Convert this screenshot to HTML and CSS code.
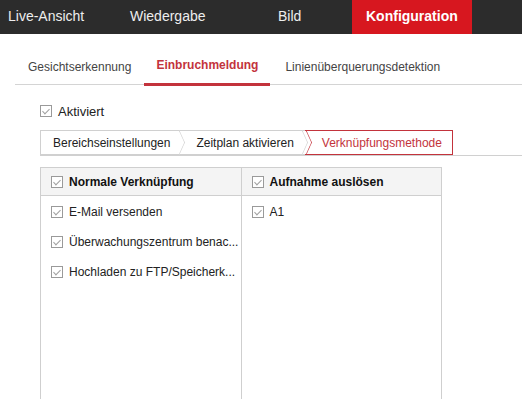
FILE: index.html
```html
<!DOCTYPE html>
<html>
<head>
    <meta charset="UTF-8">
    <title>Konfiguration</title>
    <link rel="stylesheet" href="styles.css">
</head>
<body>
    <div class="topbar">
        <a class="nav nav-live">Live-Ansicht</a>
        <a class="nav nav-play">Wiedergabe</a>
        <a class="nav nav-image">Bild</a>
        <a class="nav nav-config active">Konfiguration</a>
    </div>

    <div class="subtabs">
        <span class="subtab">Gesichtserkennung</span>
        <span class="subtab active">Einbruchmeldung</span>
        <span class="subtab">Linienüberquerungsdetektion</span>
    </div>

    <div class="content">
        <label class="check-row enable">
            <span class="box"></span>Aktiviert
        </label>

        <div class="steps">
            <span class="step">Bereichseinstellungen</span>
            <span class="step">Zeitplan aktivieren</span>
            <span class="step current">Verknüpfungsmethode</span>
        </div>

        <div class="link-table">
            <div class="col">
                <div class="col-head"><span class="box"></span>Normale Verknüpfung</div>
                <div class="col-body">
                    <div class="check-row"><span class="box"></span>E-Mail versenden</div>
                    <div class="check-row"><span class="box"></span>Überwachungszentrum benac...</div>
                    <div class="check-row"><span class="box"></span>Hochladen zu FTP/Speicherk...</div>
                </div>
            </div>
            <div class="col">
                <div class="col-head"><span class="box"></span>Aufnahme auslösen</div>
                <div class="col-body">
                    <div class="check-row"><span class="box"></span>A1</div>
                </div>
            </div>
        </div>
    </div>
</body>
</html>
```

FILE: styles.css
```css
html {
    font-family: "Liberation Sans", Arial, sans-serif;
    box-sizing: border-box;
}

*,
*:before,
*:after {
    box-sizing: inherit;
}

body {
    margin: 0;
    width: 522px;
    height: 399px;
    overflow: hidden;
    background: white;
    color: #222;
    font-size: 12px;
}

.topbar {
    display: flex;
    height: 34px;
    background: #2c2c2c;
}

.nav {
    color: #eee;
    font-size: 14px;
    line-height: 32px;
}

.nav-live { padding-left: 8px; width: 130px; }
.nav-play { width: 148px; }
.nav-image { width: 74px; }

.nav-config {
    width: 120px;
    padding-left: 14px;
    font-weight: bold;
    color: white;
    background: #d7171f;
}

.subtabs {
    display: flex;
    margin: 20px 0 0 15px;
    border-bottom: 1px solid #d4d4d4;
    height: 31px;
}

.subtab {
    padding: 6px 13px 0;
    color: #444;
    white-space: nowrap;
}

.subtab.active {
    color: #c3333c;
    font-weight: bold;
    padding: 4px 12px 0;
    border-bottom: 3px solid #c3333c;
    margin-bottom: -2px;
}

.subtab.active + .subtab {
    padding-left: 15px;
}

.content {
    padding: 19px 0 0 40px;
}

.check-row {
    display: flex;
    align-items: center;
    height: 14px;
    white-space: nowrap;
}

.box {
    flex: none;
    width: 12px;
    height: 12px;
    margin: 0 6px 0 0;
    border: 1px solid #9a9a9a;
    background: white;
    position: relative;
}

.box::after {
    content: '';
    position: absolute;
    left: 3px;
    top: 1px;
    width: 4px;
    height: 7px;
    border: solid #a0a0a0;
    border-width: 0 1px 1px 0;
    transform: rotate(45deg);
}

.enable {
    margin-bottom: 12px;
    font-size: 13px;
}

.steps {
    display: flex;
    height: 26px;
    border-bottom: 1px solid #d0d0d0;
}

.step {
    border: 1px solid #d0d0d0;
    border-right: none;
    padding: 0 12px 0 12px;
    line-height: 24px;
    position: relative;
    background: white;
    white-space: nowrap;
}

.step:nth-child(2) {
    border-left: none;
    padding-left: 14px;
    padding-right: 11px;
}

.step:nth-child(1)::after,
.step:nth-child(2)::after {
    content: '';
    position: absolute;
    right: -6px;
    top: 3px;
    width: 17px;
    height: 17px;
    border: solid #d0d0d0;
    border-width: 1px 1px 0 0;
    transform: scaleX(0.45) rotate(45deg);
    background: white;
    z-index: 1;
}

.step.current {
    border: 1px solid #c3333c;
    border-left: none;
    color: #c3333c;
    padding-left: 17px;
    padding-right: 10px;
}

.step.current::before {
    content: '';
    position: absolute;
    left: -7px;
    top: 3px;
    width: 17px;
    height: 17px;
    border: solid #c3333c;
    border-width: 1px 1px 0 0;
    transform: scaleX(0.45) rotate(45deg);
    z-index: 2;
}

.link-table {
    display: flex;
    width: 402px;
    margin-top: 11px;
    border: 1px solid #cfcfcf;
    border-bottom: none;
    height: 240px;
}

.col {
    flex: 1;
    min-width: 0;
}

.col + .col {
    border-left: 1px solid #cfcfcf;
}

.col-head {
    display: flex;
    align-items: center;
    height: 28px;
    padding-left: 10px;
    background: #f4f4f4;
    border-bottom: 1px solid #cfcfcf;
    font-weight: bold;
    color: #111;
}

.col-body {
    padding: 9px 0 0 10px;
}

.col-body .check-row {
    height: 14px;
    margin-bottom: 16px;
}
```
